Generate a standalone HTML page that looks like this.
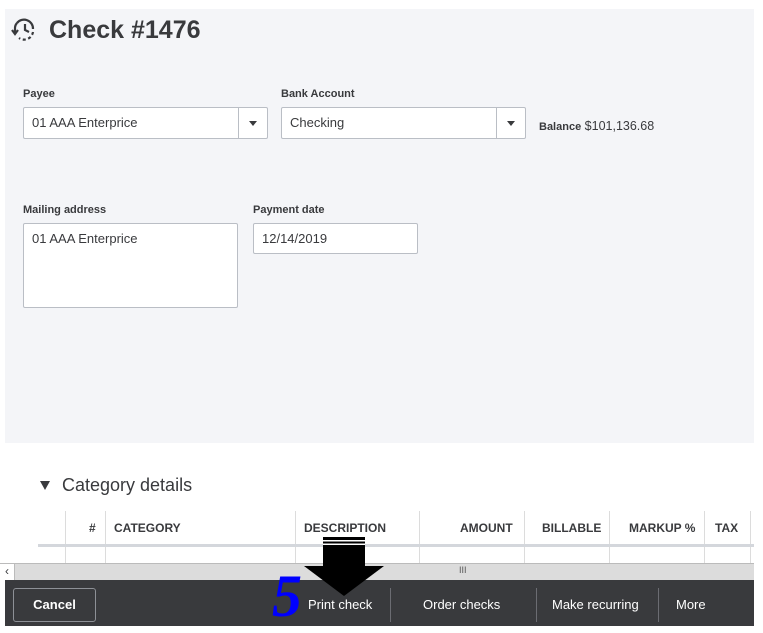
<!DOCTYPE html>
<html><head><style>
*{box-sizing:border-box;margin:0;padding:0}
body{width:763px;height:633px;background:#fff;font-family:"Liberation Sans",sans-serif;color:#393a3d;position:relative;overflow:hidden}
.a{position:absolute}
.panel{left:5px;top:9px;width:749px;height:434px;background:#f4f5f8}
.lbl{font-size:11px;font-weight:bold;color:#393a3d}
.box{background:#fff;border:1px solid #babec5;border-radius:2px;font-size:13px;padding:7px 8px;color:#393a3d}
.dd{position:absolute;right:0;top:0;width:29px;height:100%;border-left:1px solid #babec5}
.dd:after{content:"";position:absolute;left:10px;top:13px;border-left:4px solid transparent;border-right:4px solid transparent;border-top:5px solid #393a3d}
.th{font-size:12px;font-weight:bold;top:521px}
.vl{width:1px;background:#dcdcdc}
.ft{font-size:13px;color:#fff;top:597px}
.sep{width:1px;height:34px;background:#6b6c72;top:588px}
</style></head><body>
<div class="a panel"></div>
<svg class="a" style="left:10px;top:17px" width="28" height="26" viewBox="0 0 28 26"><g fill="none" stroke="#393a3d" stroke-width="2.2"><path d="M7 6 A9 9 0 0 1 23 12"/><path d="M23 15 A9 9 0 0 1 9 21" stroke-dasharray="3 2.5"/><path d="M15 7 V13 L19 15"/><path d="M2 13 L5 17 L8 13"/><path d="M5 16 V12 A8 8 0 0 1 7 6"/></g></svg>
<div class="a" style="left:49px;top:16px;font-size:25px;font-weight:bold;color:#393a3d">Check #1476</div>
<div class="a lbl" style="left:23px;top:88px">Payee</div>
<div class="a box" style="left:23px;top:107px;width:245px;height:32px">01 AAA Enterprice<div class="dd"></div></div>
<div class="a lbl" style="left:281px;top:88px">Bank Account</div>
<div class="a box" style="left:281px;top:107px;width:245px;height:32px">Checking<div class="dd"></div></div>
<div class="a" style="left:539px;top:119px;font-size:12.5px"><b style="font-size:11px">Balance</b> $101,136.68</div>
<div class="a lbl" style="left:23px;top:204px">Mailing address</div>
<div class="a box" style="left:23px;top:223px;width:215px;height:85px">01 AAA Enterprice</div>
<div class="a lbl" style="left:253px;top:204px">Payment date</div>
<div class="a box" style="left:253px;top:223px;width:165px;height:31px">12/14/2019</div>
<div class="a" style="left:62px;top:475px;font-size:18px">Category details</div>
<div class="a" style="left:40px;top:481px;width:0;height:0;border-left:5px solid transparent;border-right:5px solid transparent;border-top:9px solid #393a3d"></div>
<div class="a vl" style="left:65px;top:511px;height:52px"></div>
<div class="a vl" style="left:105px;top:511px;height:52px"></div>
<div class="a vl" style="left:295px;top:511px;height:52px"></div>
<div class="a vl" style="left:419px;top:511px;height:52px"></div>
<div class="a vl" style="left:524px;top:511px;height:52px"></div>
<div class="a vl" style="left:609px;top:511px;height:52px"></div>
<div class="a vl" style="left:704px;top:511px;height:52px"></div>
<div class="a vl" style="left:750px;top:511px;height:52px"></div>
<div class="a" style="left:38px;top:544px;width:716px;height:3px;background:#d4d7dc"></div>
<div class="a th" style="left:89px">#</div>
<div class="a th" style="left:114px">CATEGORY</div>
<div class="a th" style="left:304px">DESCRIPTION</div>
<div class="a th" style="left:460px">AMOUNT</div>
<div class="a th" style="left:542px">BILLABLE</div>
<div class="a th" style="left:629px">MARKUP %</div>
<div class="a th" style="left:715px">TAX</div>
<div class="a" style="left:0;top:563px;width:754px;height:17px;background:#dcdcdc;border-top:1px solid #bbb"></div>
<div class="a" style="left:0;top:564px;width:15px;height:16px;background:#fff;border-right:1px solid #bbb;font-size:12px;text-align:center;line-height:14px">&lsaquo;</div>
<div class="a" style="left:459px;top:565px;font-size:9px;color:#555">III</div>
<div class="a" style="left:5px;top:580px;width:749px;height:46px;background:#393a3d"></div>
<div class="a" style="left:13px;top:588px;width:83px;height:34px;border:1px solid #8d9096;border-radius:3px;color:#fff;font-size:13px;font-weight:bold;text-align:center;line-height:32px">Cancel</div>
<div class="a ft" style="left:308px">Print check</div>
<div class="a sep" style="left:390px"></div>
<div class="a ft" style="left:423px">Order checks</div>
<div class="a sep" style="left:536px"></div>
<div class="a ft" style="left:552px">Make recurring</div>
<div class="a sep" style="left:658px"></div>
<div class="a ft" style="left:676px">More</div>
<svg class="a" style="left:300px;top:535px" width="90" height="64"><rect x="23" y="2" width="42" height="30" fill="#000"/><rect x="23" y="5" width="42" height="1.5" fill="#fff"/><rect x="23" y="8.5" width="42" height="1.5" fill="#fff"/><path d="M4 31 L84 31 L44 61 Z" fill="#000"/></svg>
<div class="a" style="left:272px;top:566px;font-family:'Liberation Serif',serif;font-style:italic;font-weight:bold;font-size:60px;color:#0000ff;line-height:60px">5</div>
</body></html>
